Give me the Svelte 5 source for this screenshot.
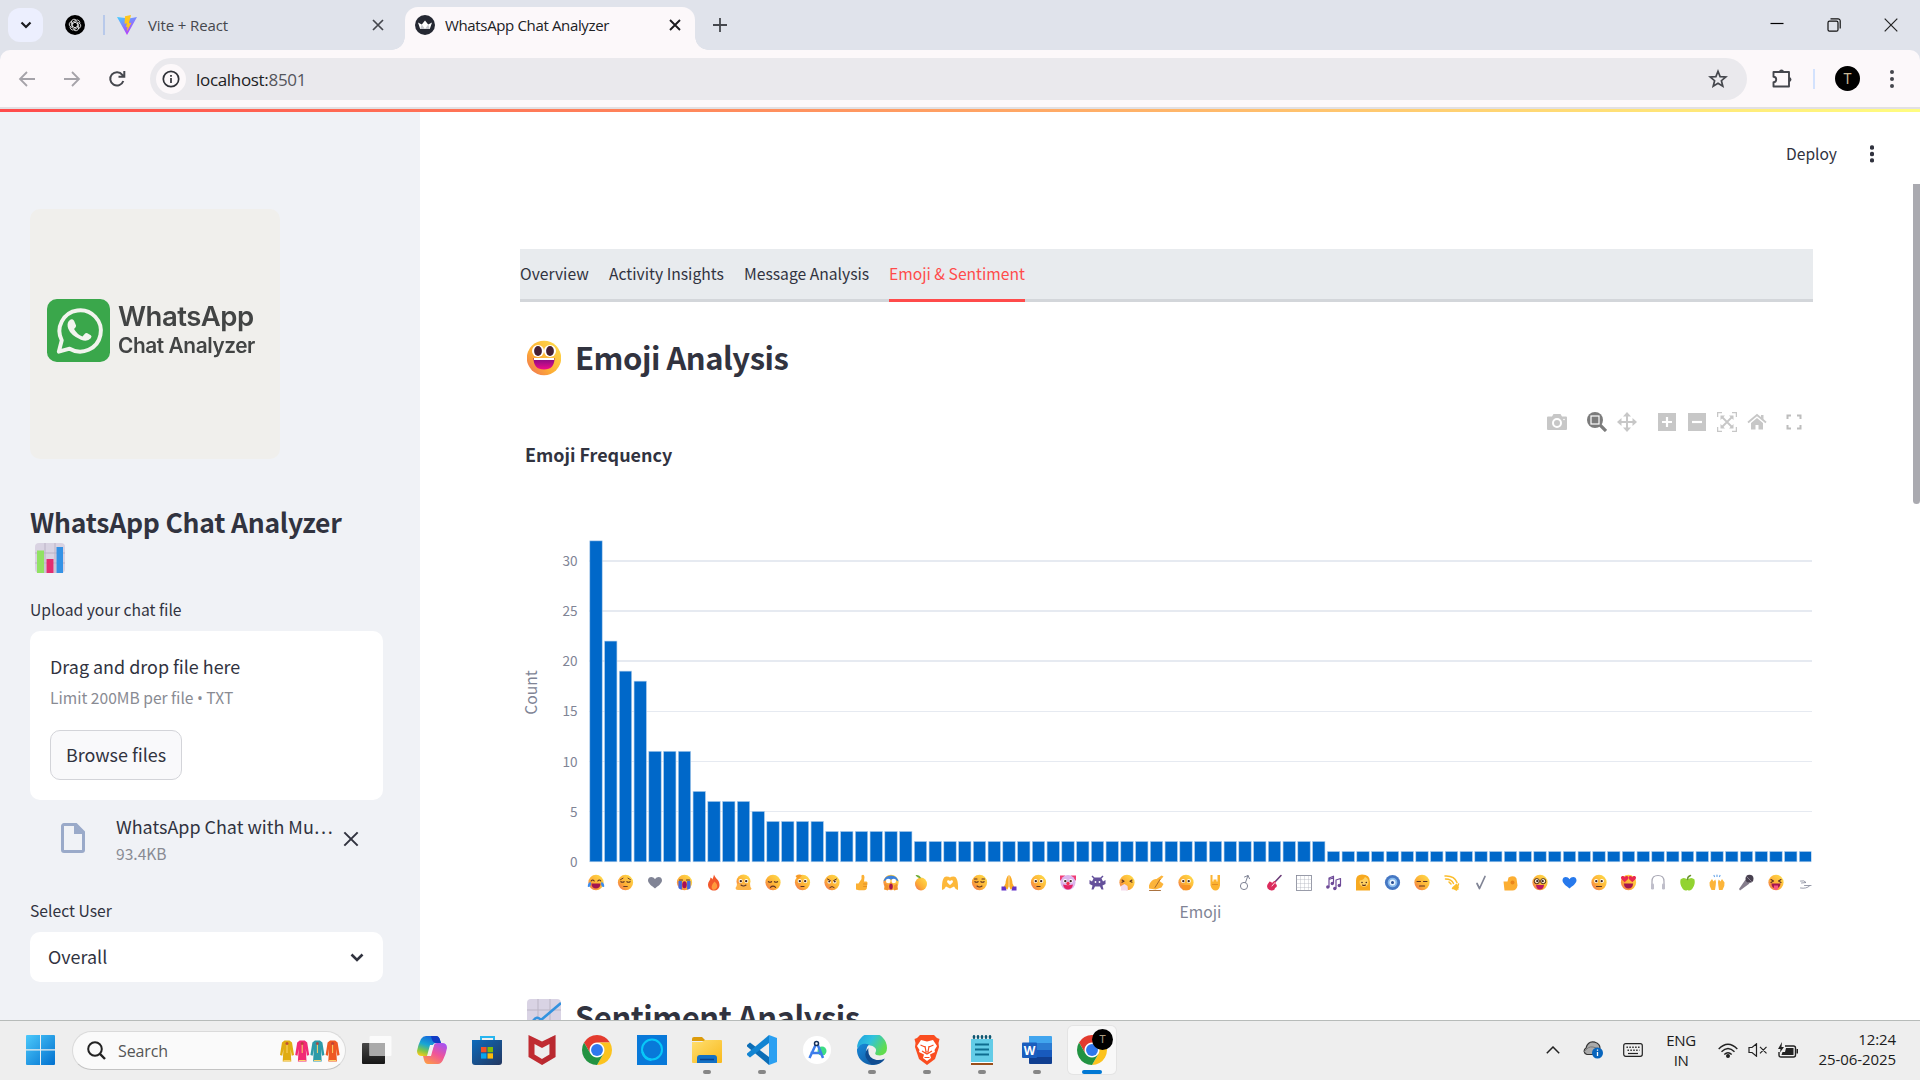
<script>
  const values = [32, 22, 19, 18, 11, 11, 11, 7, 6, 6, 6, 5, ...Array(4).fill(4), ...Array(6).fill(3), ...Array(28).fill(2), ...Array(33).fill(1)];
  const step = 14.75;
  const unit = 10.02;
  const x0 = 76;
  const y0 = 341.5;
  const grid = [30, 25, 20, 15, 10, 5];

  const base = '<ellipse rx="7.600" ry="7.800" fill="url(#skin)"/>';
  const eyes = (r = 1) => `<g fill="#4a2a20"><circle cx="-2.8" cy="-1" r="${r}"/><circle cx="2.8" cy="-1" r="${r}"/></g>`;
  const wide = '<g fill="#fff"><circle cx="-2.900" cy="-1.500" r="2"/><circle cx="2.900" cy="-1.500" r="2"/></g><g fill="#40251f"><circle cx="-2.700" cy="-1.400" r="1.200"/><circle cx="2.700" cy="-1.400" r="1.200"/></g>';
  const line = (d, c = '#5c3324', w = 1.1) => `<path d="${d}" fill="none" stroke="${c}" stroke-width="${w}" stroke-linecap="round" stroke-linejoin="round"/>`;
  const fill = (d, c) => `<path d="${d}" fill="${c}"/>`;
  const closed = line('M-4.6-.8q1.6 1.2 3.2 0M1.4-.8q1.6 1.2 3.2 0');
  const heart = 'M0 6C-3 3.600-7 1-7-2.200-7-6-2-6.800 0-3.200 2-6.800 7-6 7-2.200 7 1 3 3.600 0 6z';
  const lol = fill('M-4.600 1h9.200q-.4 5-4.600 5t-4.600-5z', '#a3164f');

  const emojis = [
    base + line('M-4.800-1.500q1.500-2 3 0M1.800-1.500q1.500-2 3 0') + lol + fill('M-8 2q1-3 3-2 0 4-2 4.500T-8 2zM8 2q-1-3-3-2 0 4 2 4.500T8 2z', '#3c8dee'),
    base + closed + line('M-5-2.800l2.500-1.500M5-2.800l-2.500-1.500M-1.800 4h3.600', '#5c3324', .9),
    fill(heart, '#808495'),
    base + line('M-5-2.500h3M2-2.500h3') + fill('M-6-1.500h3.400v8.500q-2 0-3.400-1.500zM6-1.500H2.600v8.500q2 0 3.400-1.500z', '#4268e0') + '<ellipse cy="2.300" rx="2.300" ry="3.500" fill="#a80f58"/>',
    fill('M0-8c1 4 5.500 5 5.500 10.500C5.500 6 3 8 0 8s-6-2-6-6c0-3 2.500-4 2.500-7 1 .5 1.500 1 1.800 2Q-.5-5 0-8z', '#f2582b') + fill('M.5-1q3.500 3 2.500 6Q1 8-1.500 7-4 4 .5-1z', '#ff9a3d'),
    '<circle cy="-1" r="7" fill="url(#skin)"/>' + fill('M-6.500 1q0 3-1.500 4.500 0 2.500 3.500 2h8.500q4 .5 4-1.500Q6.500 4.500 6.500 1z', '#fdb54a') + wide + line('M-2.500 2.500q2.500 2 5 0'),
    base + closed + line('M-2.600 4.800q2.600-2.400 5.200 0'),
    base + wide + fill('M-7-6.500q4-2.500 6.500-.5l-4 4z', '#f79a27') + line('M-1.500 4h3'),
    base + '<g fill="#fff"><circle cx="-2.800" cy="-.6" r="1.700"/><circle cx="2.800" cy="-.6" r="1.700"/></g>' + eyes(1) + line('M-4.500-3.500l3 1.700M4.500-3.500l-3 1.700M-2.200 5q2.200-2.200 4.400 0', '#5c3324', 1),
    fill('M-5.500 1h2.500l3-4.500V-7q2.500-1.800 3 1.500L2.500-1H5q1.500.7.8 2l-.5 5q-.5 1.800-2.500 1.800h-5.300L-5.500 7z', '#fbb034') + line('M2 1.500h3.500M2 4h3', '#dd8420', .7),
    base + fill('M-7.600-1A7.800 7.800 0 0 1 7.600-1L4-3h-8z', '#3d82dd') + '<circle cx="-2.800" cy="-1.500" r="2.300" fill="#fff"/><circle cx="2.800" cy="-1.500" r="2.300" fill="#fff"/>' + fill('M-7 7l1-6 3 2v5zM7 7l-1-6-3 2v5z', '#f3932b') + '<ellipse cy="4" rx="1.800" ry="3" fill="#a3164f"/>',
    '<ellipse cy="1.500" cx=".5" rx="6" ry="6.500" fill="url(#skin)"/>' + fill('M-5-7.500q4-.5 5.500 3-3.500 1-5.500-3z', '#6cab36'),
    fill('M-8 7.500Q-8.500-6-3.500-6q2.500 0 3.500 1 1-1 3.500-1Q8.500-6 8 7.500q-3-1-4-3.500L0 6l-4-2q-1 2.500-4 3.500z', '#fdb83a') + `<g transform="scale(.42)">${fill(heart, '#fff')}</g>`,
    base + closed + line('M-5-3.500h2.500M2.500-3.500H5M-2.500 3.500q2.500 2 5 0'),
    fill('M-.3-7.500q-2.700 2-3.200 8.500l-2 4 4 2 1.200-3zM.3-7.500q2.700 2 3.200 8.500l2 4-4 2-1.200-3z', '#fbac28') + fill('M-7.500 4l4 0 1 4h-5zM7.500 4l-4 0-1 4h5z', '#6333c8'),
    base + wide + line('M-1.600 4h3.200'),
    fill('M-8-7h5v5h-5zM8-7H3v5h5z', '#f23b73') + '<circle r="7.500" fill="#dcb6ed"/>' + wide + fill('M-5 2q5 1.500 10 0-1 5-5 5t-5-5z', '#e52366') + '<circle cy="1" r="1.700" fill="#f0354d"/>',
    fill('M-5-7l2 2h6l2-2 1 1-2 2 1.500 3L8-2.500v4L5 3l1 4H4L2.500 4h-5L-4 7h-2l1-4-3-1.500v-4L-5.500-1-4-4l-2-2z', '#64509b') + '<g fill="#fff"><circle cx="-2" cy="-.5" r=".9"/><circle cx="2" cy="-.5" r=".9"/></g>',
    base + line('M-5-2.500l2 1.200-2 1M5-2.500L3-1.300l2 1') + fill('M-6 3.500l3.500-2 3 2 .5 4.500h-7z', '#f3dcee'),
    fill('M-7.500 3Q-5-4 0-3.500L5-7l2 1-4 4.500 4 3L5 5l-6 2-6.500-1z', '#fcb43a') + line('M-7 8H4M3.500-3l-5 8', '#a0622a', .9),
    base + wide + fill('M-5 2.500h9q2.500 4-2 5.300h-5z', '#f79425'),
    fill('M-5-7.500h2V-1h1v-2h3v2h1v-6.500h2.500V3q-1 5-4.500 5T-5 3z', '#fcb331') + line('M-3 2h5', '#dc8422', .8),
    '<circle cx="-1" cy="3.500" r="3.600" fill="none" stroke="#808495" stroke-width="1"/>' + line('M.5 0l2.500-7M-.5-5.500L3-7l1.500 3.200', '#808495', 1),
    line('M-1 1l7.500-8', '#6b3b77', 1.600) + fill('M-5-1q2 0 2.500 1.500Q0-2.500 1.500-1L1 1.500q2 .5 1 3Q0 5 0 7q-2 1.500-5 .5-3.500-2-2-5.500z', '#dc2b5c') + line('M-2.500 3.500l3-3.500', '#fff', .8),
    '<rect x="-7.500" y="-7" width="15" height="15" fill="#fff" stroke="#808495" stroke-width=".8"/>' + line('M-7-3H7M-7 1H7M-7 5H7M-3.500-6V7M.5-6V7M4.500-6V7', '#b0b3be', .4),
    line('M-4.500 4.500v-9l4.500-1.800v7M2.500 5.500v-8L7-4v7M-4.500-3l4.500-1.800', '#6e4a98', 1.200) + '<g fill="#6e4a98"><circle cx="-5.700" cy="4.500" r="1.700"/><circle cx="-1.200" cy="1" r="1.700"/><circle cx="1.300" cy="6" r="1.700"/><circle cx="5.800" cy="3" r="1.700"/></g>',
    fill('M-7 8V-2q0-6 6-6 8 0 8 7v9z', '#f7a920') + '<ellipse cx="1" cy="-.5" rx="4.500" ry="5" fill="#ffd264"/>' + fill('M-4-2q5 0 6-4-5-2-6 4z', '#f7a920') + '<g fill="#4a2a20"><circle cx="-1" cy="0" r=".8"/><circle cx="3.300" cy="0" r=".8"/></g>' + line('M-.5 2.500q1.500 1 3 0'),
    '<circle r="7.600" fill="#4577c3"/><circle r="4.800" fill="#86b9ec"/><circle r="3" fill="#e9f4ff"/><circle r="1.500" fill="#254b93"/>',
    base + line('M-5-1h3.500M1.500-1H5M-2.500 3.500h5'),
    line('M-6.500-6.500Q3-7 5.500 0M-6-3.500Q0-3.500 2 1M-2.500-.5l2 2M7 1.500L5 7.500M6.500 6.500L1 6', '#fbbd2d', 1.500) + fill('M5 1l2.500 4L4 8 .5 5z', '#fbbd2d'),
    line('M-4 1l2.500 5L4-6', '#808495', 1.7),
    fill('M-7-1h4l1-4q6-3 8 1l1 7q-1 5-5 5h-8z', '#fcae32') + '<circle cx="2" cy="0" r="2" fill="#e9861d"/>',
    base + wide + '<g fill="none" stroke="#40251f" stroke-width=".9"><circle cx="-3.200" cy="-1.300" r="2.600"/><circle cx="3.200" cy="-1.300" r="2.600"/></g>' + fill('M-4 2.500h8q-.5 4.500-4 4.500t-4-4.500z', '#bd1760'),
    fill(heart, '#2779ec'),
    base + wide + line('M-2.500 4h5'),
    base + lol + `<g transform="translate(-3.800 -3.500) scale(.53)">${fill(heart, '#e9284f')}</g><g transform="translate(3.800 -3.500) scale(.53)">${fill(heart, '#e9284f')}</g>`,
    line('M-6 3v-4q0-6 6-6t6 6v4', '#a8a7b4', 1.200) + '<rect x="-7" y="1" width="3" height="6" rx="1.300" fill="#bfbeca"/><rect x="4" y="1" width="3" height="6" rx="1.300" fill="#bfbeca"/>',
    fill('M0-3q4-3 7 0 1 5-2 9-2 3-5 1.500Q-3 9-5 6q-3-4-2-9 3-3 7 0z', '#92d331') + line('M0-3q0-3 3-4', '#6d9535', 1.500),
    fill('M-2 7.500h-3.500Q-8 4-7.500 0L-5-3.500-3.500-1l1.800-2Q-.5-1-1.300 3zM2 7.500h3.500Q8 4 7.500 0L5-3.500 3.500-1l-1.800-2Q.5-1 1.300 3z', '#fcb53a') + line('M0-7.500v1.500M-3-7l.5 1M3-7l-.5 1', '#6aa7e9', 1.200),
    fill('M-7.500 6.500L-1-3l4 4-9.500 7z', '#857d8c') + '<circle cx="3" cy="-3.800" r="4" fill="#48404f"/>' + line('M0-6l5 5', '#9992a3', .8),
    base + line('M-5-3l2.500 1.500L-5 0M5-3L2.500-1.500 5 0') + lol + fill('M-2 3h4v3.500q-2 2-4 0z', '#f75581'),
    line('M-5-1.500q4-1 5.500 1.500L-4 .5M-1 3h7M-5 5.500q6 1 9-2', '#808495', .8)
  ];

  const pins = [
    { id: 'taskview' }, { id: 'copilot' }, { id: 'store' }, { id: 'mcafee' }, { id: 'chrome' }, { id: 'alexa' },
    { id: 'explorer', open: true }, { id: 'code', open: true }, { id: 'studio' }, { id: 'edge', open: true },
    { id: 'brave', open: true }, { id: 'notepad', open: true }, { id: 'word', open: true }, { id: 'chrome', active: true }
  ];
  const robes = ['#e0ac12', '#f12a75', '#2d9aa9', '#ee5923'];
</script>

{#snippet chromeLogo()}
  <svg viewBox="0 0 48 48" width="30" height="30">
    <circle cx="24" cy="24" r="12" fill="#fff" />
    <path d="M24 12H44.780a24 24 0 0 0-41.560 0L13.610 30A12 12 0 0 1 24 12Z" fill="#e33b2e" />
    <path d="M34.390 30 24 48A24 24 0 0 0 44.780 12H24A12 12 0 0 1 34.390 30Z" fill="#fcc31e" />
    <path d="M13.610 30 3.220 12A24 24 0 0 0 24 48L34.390 30A12 12 0 0 1 13.610 30Z" fill="#229342" />
    <circle cx="24" cy="24" r="9.500" fill="#2f78ee" />
  </svg>
{/snippet}

{#snippet cross(size, w, color)}
  <svg width={size} height={size} viewBox="0 0 12 12"><path d="M1 1l10 10M11 1L1 11" stroke={color} stroke-width={w} fill="none" /></svg>
{/snippet}

<div class="screen">
  <header class="tabstrip">
    <div class="tabsearch">
      <svg width="12" height="8" viewBox="0 0 12 8"><path d="M1.500 1.500L6 6l4.500-4.500" fill="none" stroke="#1b1b1f" stroke-width="2.200" /></svg>
    </div>
    <svg class="gpt" width="20" height="20" viewBox="0 0 20 20">
      <circle cx="10" cy="10" r="10" fill="#000" />
      <g fill="none" stroke="#fff" stroke-width=".75">
        {#each [0, 60, 120, 180, 240, 300] as a}
          <path d="M7.600 12V7.200l3.200-1.900a2.800 2.800 0 0 1 3.900 3.500" transform="rotate({a} 10 10)" />
        {/each}
      </g>
    </svg>
    <i class="pinsep"></i>
    <div class="tab idle">
      <svg width="20" height="20" viewBox="0 0 20 20">
        <defs>
          <linearGradient id="vite" x1="0" y1="0" x2=".6" y2="1"><stop offset="0" stop-color="#41d1ff" /><stop offset="1" stop-color="#bd34fe" /></linearGradient>
        </defs>
        <path d="M0 2l10 18L20 2l-8 1.500z" fill="url(#vite)" />
        <path d="M14 0L8 1.200l-.5 7.500 2.300-.5-.8 4 1.600-.4-.8 5 4.600-9-2.500.4z" fill="#ffc61c" />
      </svg>
      <span>Vite + React</span>
      {@render cross(12, 1.7, '#45474d')}
    </div>
    <div class="tab current">
      <svg width="20" height="20" viewBox="0 0 20 20">
        <circle cx="10" cy="10" r="10" fill="#252832" />
        <path d="M3 7.500l3.800 2L10 5.500l3.200 4 3.800-2-2.200 6.500H5.200z" fill="#fff" />
        <path d="M6.800 9.500L10 14H5.200zM13.200 9.500L10 14h4.800z" fill="#c9cad0" />
      </svg>
      <span>WhatsApp Chat Analyzer</span>
      {@render cross(12, 1.9, '#1b1b1f')}
    </div>
    <svg class="newtab" width="14" height="14" viewBox="0 0 14 14"><path d="M7 0v14M0 7h14" stroke="#45474d" stroke-width="1.800" /></svg>
    <div class="winctl">
      <svg width="14" height="14" viewBox="0 0 14 14"><path d="M.5 5.500h13" stroke="#000" stroke-width="1.200" /></svg>
      <svg width="14" height="14" viewBox="0 0 14 14" fill="none" stroke="#111" stroke-width="1.200"><rect x="1" y="3.200" width="10" height="10" rx="1.500" /><path d="M3.500.8h7.500a2.200 2.200 0 0 1 2.200 2.200v7.500" /></svg>
      <svg width="14" height="14" viewBox="0 0 14 14"><path d="M.7.7l12.600 12.600M13.300.7L.7 13.300" stroke="#222" stroke-width="1.200" /></svg>
    </div>
  </header>

  <div class="toolbar">
    <svg class="nav" width="18" height="18" viewBox="0 0 18 18" fill="none" stroke="#a5a3a9" stroke-width="1.800"><path d="M17 9H2M9 2L2 9l7 7" /></svg>
    <svg class="nav" width="18" height="18" viewBox="0 0 18 18" fill="none" stroke="#a5a3a9" stroke-width="1.800"><path d="M1 9h15M9 2l7 7-7 7" /></svg>
    <svg class="nav" width="18" height="18" viewBox="0 0 18 18" fill="none" stroke="#45474d" stroke-width="2"><path d="M15.300 11a6.700 6.700 0 1 1-1-6.200l1.400 1.600M16.300 1v5.800h-5.800" /></svg>
    <div class="omnibox">
      <div class="info"><svg width="18" height="18" viewBox="0 0 18 18"><circle cx="9" cy="9" r="7.700" fill="none" stroke="#303238" stroke-width="1.700" /><path d="M9 8v5M9 5v1.800" stroke="#303238" stroke-width="1.700" /></svg></div>
      <span class="url">localhost:<em>8501</em></span>
      <svg class="star" width="20" height="20" viewBox="0 0 20 20"><path d="M10 2.300l2.100 5.300 5.700.4-4.400 3.700 1.400 5.500-4.800-3-4.800 3 1.400-5.500L2.200 8l5.700-.4z" fill="none" stroke="#45474d" stroke-width="1.700" /></svg>
    </div>
    <svg class="puzzle" width="22" height="22" viewBox="0 0 22 22"><path d="M3.500 4h5.200M12.300 4H18v14.500H2.500v-4.300a2.700 2.700 0 0 0 0-5.400V4h6.200M12.300 4H8.700" fill="none" stroke="#45474d" stroke-width="1.900" stroke-linejoin="round" /><path d="M8 4a2.500 2.500 0 0 1 5 0zM18 9a2.500 2.500 0 0 1 0 5z" fill="#45474d" /></svg>
    <i class="toolsep"></i>
    <div class="avatar">T</div>
    <svg class="more" width="4" height="20" viewBox="0 0 4 20" fill="#45474d"><circle cx="2" cy="3" r="2" /><circle cx="2" cy="10" r="2" /><circle cx="2" cy="17" r="2" /></svg>
  </div>
  <div class="rainbow"></div>

  <div class="page">
    <aside>
      <div class="brand">
        <svg class="wa" width="63" height="63" viewBox="0 0 64 64">
          <rect width="64" height="64" rx="10" fill="#3aa74b" />
          <path d="M12 53.500l3-11.500A21 21 0 1 1 23 50.500z" fill="none" stroke="#f2f4ee" stroke-width="4" stroke-linejoin="round" />
          <path d="M22 22.500q3-3.500 5.500-.5l2 5q.5 1.500-2 3.500 3 5.500 8.500 7.500l2.500-2.800q1-1 2.500-.3l3.500 2q1.500 1 0 3-3.500 4-10 1.500Q24 37 21.500 30q-1.500-4.500.5-7.500z" fill="#f2f4ee" />
        </svg>
        <div class="brandtext"><b>WhatsApp</b><span>Chat Analyzer</span></div>
      </div>
      <h2><span>WhatsApp Chat Analyzer</span>
        <svg width="30" height="30" viewBox="0 0 30 30">
          <rect width="30" height="30" rx="4" fill="#d9d3e2" />
          <path d="M10 0v30M20 0v30M0 10h30M0 20h30" stroke="#bbb3c6" stroke-width="1" />
          <rect x="2" y="7.500" width="7" height="22.500" fill="#91e263" /><rect x="11.500" y="16" width="7" height="14" fill="#e32d70" /><rect x="21.500" y="4" width="6.500" height="26" fill="#3492e5" />
        </svg>
      </h2>
      <label class="lbl">Upload your chat file</label>
      <div class="drop">
        <div class="t20">Drag and drop file here</div>
        <div class="small">Limit 200MB per file <i>•</i> TXT</div>
        <button class="t20">Browse files</button>
      </div>
      <div class="file">
        <svg width="24" height="30" viewBox="0 0 24 30"><path d="M3 1.500h12l7.500 7.500v18a1.500 1.500 0 0 1-1.500 1.500H3A1.500 1.500 0 0 1 1.500 27V3A1.500 1.500 0 0 1 3 1.500z" fill="none" stroke="#9aaac9" stroke-width="3" /><path d="M13 1l10 10H13z" fill="#9aaac9" /></svg>
        <div class="meta"><span class="t20">WhatsApp Chat with Mu…</span><span class="small">93.4KB</span></div>
        {@render cross(16, 1.5, '#31333f')}
      </div>
      <label class="lbl">Select User</label>
      <div class="select t20"><span>Overall</span>
        <svg width="14" height="9" viewBox="0 0 14 9"><path d="M1.500 1.500L7 7l5.500-5.500" fill="none" stroke="#31333f" stroke-width="2.600" /></svg>
      </div>
    </aside>

    <main>
      <div class="deploy"><span>Deploy</span>
        <svg width="4" height="18" viewBox="0 0 4 18" fill="#31333f"><circle cx="2" cy="2.500" r="2.200" /><circle cx="2" cy="9" r="2.200" /><circle cx="2" cy="15.400" r="2.200" /></svg>
      </div>
      <nav>
        <span class="n1">Overview</span><span class="n2">Activity Insights</span><span class="n3">Message Analysis</span><span class="n4 on">Emoji &amp; Sentiment</span>
      </nav>
      <h1>
        <svg width="34" height="36" viewBox="0 0 34 36">
          <defs>
            <linearGradient id="skin" x1="1" y1="0" x2="0" y2="1"><stop offset="0" stop-color="#ffe14d" /><stop offset=".6" stop-color="#fdae35" /><stop offset="1" stop-color="#ee6a58" /></linearGradient>
            <linearGradient id="mouth" x1="0" y1="0" x2="0" y2="1"><stop offset="0" stop-color="#7c0b83" /><stop offset="1" stop-color="#ee0d8b" /></linearGradient>
          </defs>
          <circle cx="17" cy="18" r="17.200" fill="url(#skin)" />
          <circle cx="11" cy="11" r="6" fill="#fff" /><circle cx="23" cy="11" r="6" fill="#fff" />
          <ellipse cx="11" cy="11" rx="3.900" ry="5" fill="#452034" /><ellipse cx="23" cy="11" rx="3.900" ry="5" fill="#452034" />
          <path d="M6.500 18h21q0 11.500-10.500 11.500T6.500 18z" fill="url(#mouth)" />
          <path d="M7 18h20v2H7z" fill="#fff" />
        </svg>
        <span>Emoji Analysis</span>
      </h1>
      <div class="modebar">
        <svg class="m1" width="20" height="20" viewBox="0 0 20 20"><path d="M1 4.500h4l1.500-2.500h7L15 4.500h4q1 0 1 1V17q0 1-1 1H1q-1 0-1-1V5.500q0-1 1-1z" fill="#c7c7c7" /><circle cx="10" cy="11" r="4" fill="none" stroke="#fff" stroke-width="2" /><circle cx="17" cy="7.500" r=".8" fill="#fff" /></svg>
        <svg class="m2" width="20" height="20" viewBox="0 0 20 20"><circle cx="8" cy="8" r="8" fill="#7c7c7c" /><path d="M12 12l7 7" stroke="#7c7c7c" stroke-width="3.200" /><rect x="4" y="4" width="8" height="8" fill="none" stroke="#fff" stroke-width="1.200" /></svg>
        <svg class="m3" width="20" height="20" viewBox="0 0 20 20"><path d="M10 2v16M2 10h16" stroke="#c7c7c7" stroke-width="2" /><path d="M10 0l4 4.500H6zM10 20l4-4.500H6zM0 10l4.500-4v8zM20 10l-4.500-4v8z" fill="#c7c7c7" /></svg>
        <svg class="m4" width="20" height="20" viewBox="0 0 20 20"><path d="M1 1h18v18H1z" fill="#c7c7c7" /><path d="M10 5v10M5 10h10" stroke="#fff" stroke-width="2.200" /></svg>
        <svg class="m5" width="20" height="20" viewBox="0 0 20 20"><path d="M1 1h18v18H1z" fill="#c7c7c7" /><path d="M5 10h10" stroke="#fff" stroke-width="2.200" /></svg>
        <svg class="m6" width="20" height="20" viewBox="0 0 20 20"><path d="M.6 5V.6H5M15 .6h4.400V5M19.400 15v4.400H15M5 19.400H.6V15" fill="none" stroke="#c7c7c7" stroke-width="1.300" /><path d="M5 5l10 10M15 5L5 15" stroke="#c7c7c7" stroke-width="1.800" /><path d="M3.500 3.500H8L3.500 8zM16.500 3.500H12L16.500 8zM3.500 16.500H8L3.500 12zM16.500 16.500H12l4.500-4.500z" fill="#c7c7c7" /></svg>
        <svg class="m7" width="20" height="20" viewBox="0 0 20 20"><path d="M1 10.500l9-7.500 9 7.500" fill="none" stroke="#c7c7c7" stroke-width="1.800" /><path d="M14 3h2.500v5L14 6zM4 11l6-5 6 5v6.500h-4.500V13h-3v4.500H4z" fill="#c7c7c7" /></svg>
        <svg width="16" height="16" viewBox="0 0 16 16"><path d="M1.500 5V1.500H5M11 1.500h3.500V5M14.500 11v3.500H11M5 14.500H1.500V11" fill="none" stroke="#bdbdbd" stroke-width="2" /></svg>
      </div>
      <h3>Emoji Frequency</h3>

      <svg class="chart" width="1293" height="420" viewBox="0 0 1293 420">
        {#each grid as g, i}
          <line x1="69" x2="1292" y1={Math.round(y0 - g * unit) - (i < 3 ? 0 : -0.5)} y2={Math.round(y0 - g * unit) - (i < 3 ? 0 : -0.5)} stroke="#e6eaf1" stroke-width={i < 3 ? 2 : 1} />
          <text x="57.500" y={y0 - g * unit + 5.2} text-anchor="end">{g}</text>
        {/each}
        <text x="57.500" y="347" text-anchor="end">0</text>
        {#each values as v, i}
          <rect x={x0 + i * step - 6.2} y={y0 - v * unit} width="12.400" height={v * unit + 0.3} fill="#0068c9" stroke="#b4d0ec" stroke-width=".6" />
        {/each}
        {#each emojis as e, i}
          <g transform="translate({x0 + i * 2 * step} 362.500)">{@html e}</g>
        {/each}
        <rect x="1291.500" y="325" width="2" height="60" fill="#fff" />
        <text class="axis" x="680.500" y="398" text-anchor="middle">Emoji</text>
        <text class="axis" transform="translate(16.800 172.500) rotate(-90)" text-anchor="middle">Count</text>
      </svg>

      <h1 class="second">
        <svg width="34" height="36" viewBox="0 0 34 36"><rect width="34" height="36" rx="4" fill="#d9d3e4" /><path d="M11 0v36M23 0v36M0 11h34" stroke="#bbb5c5" /><path d="M6 22q4-6 8-1L34 4" fill="none" stroke="#3492df" stroke-width="2.600" /></svg>
        <span>Sentiment Analysis</span>
      </h1>
      <i class="thumb"></i>
    </main>
  </div>

  <footer>
    <svg class="start" width="29" height="30" viewBox="0 0 29 30">
      <defs><linearGradient id="win" x1="0" y1="0" x2="1" y2="1"><stop offset="0" stop-color="#4cc9fb" /><stop offset="1" stop-color="#0170cf" /></linearGradient></defs>
      <path d="M1 0h13v14.300H0V1q0-1 1-1zM15 0h13q1 0 1 1v13.300H15zM0 15.500h14V30H1q-1 0-1-1zM15 15.500h14V29q0 1-1 1H15z" fill="url(#win)" />
    </svg>
    <div class="search">
      <svg width="19" height="19" viewBox="0 0 19 19"><circle cx="8" cy="8" r="6.800" fill="none" stroke="#222" stroke-width="2" /><path d="M12.700 12.700l5.300 5.300" stroke="#222" stroke-width="2.400" /></svg>
      <span>Search</span>
      <svg class="robes" width="60" height="22" viewBox="0 0 60 22">
        {#each robes as c, i}
          <g transform="translate({i * 15.2} 0)"><path d="M4.500.5h5l2.500 2 2 12.500-2.300.8L10.600 9l.7 12.500H2.700L3.400 9 2.300 15.800 0 15 2 2.500z" fill={c} /><path d="M7 4v9M3.500 20.500h7" stroke="#fbd36b" stroke-width="1" /><circle cx="7" cy="3.500" r="1.500" fill="#b63c38" opacity=".8" /></g>
        {/each}
      </svg>
    </div>
    <div class="pins">
      {#each pins as p}
        <div class="pin" class:active={p.active}>
          {#if p.id === 'chrome'}
            {@render chromeLogo()}
          {:else}
            <svg width="30" height="30" viewBox="0 0 30 30">
              {#if p.id === 'taskview'}
                <defs><linearGradient id="tv" x1="0" y1="0" x2="0" y2="1"><stop offset="0" stop-color="#474747" /><stop offset="1" stop-color="#161616" /></linearGradient></defs>
                <rect y="8" width="23" height="21" rx="1" fill="url(#tv)" /><rect x="7.500" y="1" width="22" height="20" rx="1" fill="#fff" opacity=".75" /><path d="M7.500 8H23v13H7.500z" fill="#aaa" />
              {:else if p.id === 'copilot'}
                <defs>
                  <linearGradient id="cp1" x1=".6" y1="0" x2=".2" y2="1"><stop offset="0" stop-color="#1563dc" /><stop offset=".45" stop-color="#19a7d4" /><stop offset=".75" stop-color="#7dc64b" /><stop offset="1" stop-color="#f8ca17" /></linearGradient>
                  <linearGradient id="cp2" x1=".8" y1="0" x2=".2" y2="1"><stop offset="0" stop-color="#a552f2" /><stop offset=".5" stop-color="#f05598" /><stop offset="1" stop-color="#fd9a47" /></linearGradient>
                </defs>
                <path d="M9 1h10q3 0 4 4l1 3h-5q-3 0-4 4l-2 7q-1 2-3 2H5q-5 0-5-5 1-6 4-12 2-3 5-3z" fill="url(#cp1)" />
                <path d="M21 29H11q-3 0-4-4l-1-4h5q2 0 3-3l3-8q1-2 3-2h5q5 0 5 5-1 6-4 12-2 4-5 4z" fill="url(#cp2)" />
                <path d="M14 1h5q3 0 4 4l1 3h-6q-3-1-4-7z" fill="#123bc4" /><path d="M13 10h4l-3 11h-4z" fill="#f2f0ef" />
              {:else if p.id === 'store'}
                <defs><linearGradient id="st" x1="0" y1="0" x2="1" y2="1"><stop offset="0" stop-color="#0d6bbc" /><stop offset="1" stop-color="#233760" /></linearGradient></defs>
                <path d="M9 6V2h13v4" fill="none" stroke="#27b5ef" stroke-width="2" /><path d="M0 5h30v22q0 3-3 3H3q-3 0-3-3z" fill="url(#st)" />
                <path d="M9 12h5.500v5.300H9z" fill="#f35325" /><path d="M15.500 12H21v5.300h-5.500z" fill="#81bc06" /><path d="M9 18.300h5.500v5.300H9z" fill="#05a6f0" /><path d="M15.500 18.300H21v5.300h-5.500z" fill="#ffba08" />
              {:else if p.id === 'mcafee'}
                <path d="M1.500 0L15 6.500 28.500 0v22L15 30 1.500 22zM7.500 9v10.500L15 24l7.500-4.500V9L15 13z" fill="#c02b31" fill-rule="evenodd" /><path d="M15 24v6l13.500-8V0l-6 3v16.500z" fill="#a8252d" opacity=".3" />
              {:else if p.id === 'alexa'}
                <path d="M0 0h30v30H0z" fill="#0879d9" /><circle cx="15" cy="14.500" r="10" fill="none" stroke="#08c8f8" stroke-width="2" /><path d="M5.500 17q2 7.500 9 8" fill="none" stroke="#08c8f8" stroke-width="2.400" />
              {:else if p.id === 'explorer'}
                <defs><linearGradient id="fx" x1="0" y1="0" x2="1" y2="1"><stop offset="0" stop-color="#ffdf70" /><stop offset="1" stop-color="#f9b91c" /></linearGradient></defs>
                <path d="M0 4q0-2 2-2h8l4 4H0z" fill="#dc9b0b" /><path d="M0 7h10l3-2h16q1 0 1 1v21q0 1-1 1H1q-1 0-1-1z" fill="url(#fx)" /><path d="M5 28v-5q0-3 3-3h14q3 0 3 3v5z" fill="#1370c4" /><path d="M8 24.500h14" stroke="#07438e" stroke-width="1.500" />
              {:else if p.id === 'code'}
                <path d="M22 0l8 3v24l-8 3z" fill="#2ba0f2" /><path d="M0 10l3-2.500L22 22v8L0 11.500z" fill="#0b6db6" /><path d="M0 20l3 2.500L22 8V0L0 18.500z" fill="#1184d2" />
              {:else if p.id === 'studio'}
                <circle cx="15" cy="15" r="14" fill="#fff" /><circle cx="20" cy="16" r="4.500" fill="#3ddc84" /><path d="M14.500 8L7.500 23M15 8l6 15M8.500 18h11" fill="none" stroke="#3d7eea" stroke-width="2.500" /><circle cx="14.500" cy="8.500" r="2" fill="#fff" stroke="#16325c" stroke-width="1.500" />
              {:else if p.id === 'edge'}
                <defs>
                  <linearGradient id="e1" x1="0" y1="0" x2="1" y2=".5"><stop offset="0" stop-color="#1c9ce0" /><stop offset=".5" stop-color="#30c2dd" /><stop offset="1" stop-color="#60dc4f" /></linearGradient>
                  <linearGradient id="e2" x1="0" y1="0" x2="1" y2="1"><stop offset="0" stop-color="#1989d9" /><stop offset="1" stop-color="#0d4f96" /></linearGradient>
                </defs>
                <path d="M0 13A15 15 0 0 1 30 13q0 7-7 7.500-6 0-4.500-3 2-4-3-6.500Q6 8 0 13z" fill="url(#e1)" />
                <path d="M0 14q4-7 12-4.500Q8 13 9.500 19q2 9 18 5.500-5 6-13 5.500A15 15 0 0 1 0 14z" fill="url(#e2)" />
                <path d="M11.500 13q-1.500 10 8 12 5 .5 8.500-1.500-5 7-14 5.500Q4 20 11.500 13z" fill="#104d91" />
              {:else if p.id === 'brave'}
                <path d="M8 0h14l3 3 2.500 1-1 4 .5 4-4 12-8 6-8-6-4-12 .5-4-1-4L5 3z" fill="#fa4d20" /><path d="M9 5l6 1.500L21 5l4 6-2.500 4 .5 2-5 2.500 1 3.500-4 3-4-3 1-3.500L7 17l.5-2L5 11z" fill="#fff" /><path d="M8.500 10l4.500 2M21.500 10L17 12M13 11l1 6h2l1-6M10 16l5 3 5-3M12.500 22.500h5" stroke="#fa4d20" stroke-width="1.200" fill="none" />
              {:else if p.id === 'notepad'}
                <path d="M4 4h22v23H4z" fill="#63cce7" /><path d="M4 27h22v1.200H4z" fill="#fff" /><path d="M4 28h22v2H4z" fill="#9a4e19" /><path d="M8 9.500h14M8 14.500h14M8 19.500h14" stroke="#0e6d90" stroke-width="1.800" />
                <g fill="#0e5671">{#each [7, 11, 15, 19, 23] as x}<rect x={x - 1.2} y="0" width="2.400" height="4" rx="1.200" />{/each}</g>
              {:else if p.id === 'word'}
                <path d="M7 1h22q1 0 1 1v6H7z" fill="#41a5ee" /><path d="M7 8h23v7H7z" fill="#2b7cd3" /><path d="M7 15h23v7H7z" fill="#185abd" /><path d="M7 22h23v6q0 1-1 1H8q-1 0-1-1z" fill="#103f91" />
                <rect y="7.500" width="15" height="15.500" rx="1" fill="#1b5ebe" /><text x="7.500" y="19.500" text-anchor="middle" class="wordw">W</text>
              {/if}
            </svg>
          {/if}
          {#if p.active}<b class="badge">T</b>{/if}
          {#if p.open || p.active}<i class="dot"></i>{/if}
        </div>
      {/each}
    </div>
    <div class="tray">
      <svg class="t1" width="14" height="8" viewBox="0 0 14 8"><path d="M.8 7.200L7 1l6.200 6.200" fill="none" stroke="#222" stroke-width="1.500" /></svg>
      <svg class="t2" width="20" height="18" viewBox="0 0 20 18"><path d="M4 13.500A3.500 3.500 0 0 1 3 7Q5-.5 12 1.200q5 1.500 5 6l-5 6.300z" fill="#aaa" stroke="#333" stroke-width="1.200" /><path d="M1 11q4-6 9-5l7 2" stroke="#777" fill="none" /><circle cx="14.500" cy="12" r="5.500" fill="#0865bd" /><path d="M14.500 11v4M14.500 8.500v1.300" stroke="#fff" stroke-width="1.300" /></svg>
      <svg class="t3" width="20" height="14" viewBox="0 0 20 14"><rect x=".7" y=".7" width="18.600" height="12.600" rx="2" fill="none" stroke="#222" stroke-width="1.200" /><path d="M3.500 4.300h14M4.500 7.200h12" stroke="#222" stroke-width="1.400" stroke-dasharray="1.400 1.500" /><path d="M5 10.500h10" stroke="#222" stroke-width="1.200" /></svg>
      <div class="lang"><span>ENG</span><span>IN</span></div>
      <svg class="t4" width="20" height="15" viewBox="0 0 20 15" fill="none" stroke="#222" stroke-width="1.400"><path d="M.7 6q9.300-9.500 18.600 0M3.500 8.800q6.500-6.600 13 0M6.300 11.500q3.700-3.700 7.400 0" /><circle cx="10" cy="13" r="1.300" fill="#222" /></svg>
      <svg class="t5" width="20" height="14" viewBox="0 0 20 14" fill="none" stroke="#222" stroke-width="1.200"><path d="M1 4.500h3L8.500.8v12.400L4 9.500H1zM12 3.800l6.500 6.500M18.500 3.800L12 10.300" /></svg>
      <svg class="t6" width="21" height="16" viewBox="0 0 21 16"><path d="M7 4h8.500q2 0 2 2v7q0 2-2 2H3q-2 0-2-2v-3" fill="none" stroke="#222" stroke-width="1.400" /><path d="M8 6h7.500v7H3.500l1-3H7zM18.500 7H20v4.500h-1.500zM4 0L0 7h2.500L2 10.500 6 5H3.500z" fill="#222" /></svg>
      <div class="clock"><span>12:24</span><span>25-06-2025</span></div>
    </div>
  </footer>
</div>

<style>
  :global(body) { margin: 0; overflow: hidden; }
  .screen { width: 1920px; height: 1080px; display: flex; flex-direction: column; overflow: hidden; background: linear-gradient(#e0e3eb 70px, #fff 70px); font-family: "Noto Sans CJK SC", "Open Sans", sans-serif; color: #31333f; }
  svg { flex: none; display: block; }

  .tabstrip, .toolbar, footer { font-family: "Open Sans", "Noto Sans", sans-serif; }
  .tabstrip { height: 50px; flex: none; background: #e0e3eb; display: flex; align-items: center; box-sizing: border-box; padding-left: 8px; }
  .tabsearch { width: 35px; height: 34px; border-radius: 12px; background: #eceffe; display: grid; place-items: center; }
  .gpt { margin-left: 22px; }
  .pinsep { width: 2px; height: 20px; background: #b8c9ea; margin-left: 18px; }
  .tab { display: flex; align-items: center; font-size: 15px; box-sizing: border-box; }
  .tab span { flex: 1; margin-left: 10px; white-space: nowrap; line-height: 20px; }
  .idle { width: 300px; padding: 0 21px 0 12px; color: #45474d; letter-spacing: -0.12px; }
  .idle span { margin-left: 11px; }
  .current { position: relative; width: 290px; height: 43px; align-self: flex-end; background: #fcf8fa; border-radius: 13px 13px 0 0; padding: 0 14px 7px 10px; color: #202124; letter-spacing: -0.35px; }
  .current::before, .current::after { content: ""; position: absolute; bottom: 0; width: 13px; height: 13px; }
  .current::before { left: -13px; background: radial-gradient(circle at 0 0, transparent 12.5px, #fcf8fa 13px); }
  .current::after { right: -13px; background: radial-gradient(circle at 100% 0, transparent 12.5px, #fcf8fa 13px); }
  .newtab { margin-left: 18px; }
  .winctl { margin-left: auto; padding-right: 22px; display: flex; gap: 43px; }

  .toolbar { height: 59px; flex: none; box-sizing: border-box; background: linear-gradient(#fcf8fa 57px, #e2e0e3 57px); display: flex; align-items: center; padding: 0 26px 2px 18px; border-radius: 10px 10px 0 0; }
  .nav { margin-right: 27px; }
  .nav:nth-child(3) { margin-right: 24px; }
  .omnibox { width: 1597px; height: 42px; border-radius: 21px; background: #eae9ed; box-sizing: border-box; display: flex; align-items: center; padding: 0 19px 0 6px; }
  .info { width: 30px; height: 30px; border-radius: 50%; background: #fcf8fa; display: grid; place-items: center; }
  .url { flex: 1; margin-left: 10px; padding-top: 1px; font-size: 17px; letter-spacing: -0.32px; color: #202124; }
  .url em { font-style: normal; color: #54555c; }
  .puzzle { margin-left: 24px; }
  .toolsep { width: 2px; height: 20px; background: #d3e2fd; margin-left: 20px; }
  .avatar { width: 25px; height: 25px; border-radius: 50%; background: #000; color: #c8b898; font: 14px/25px "Inter", sans-serif; text-align: center; margin-left: 20px; }
  .more { margin-left: auto; }
  .rainbow { height: 3px; flex: none; background: linear-gradient(90deg, #ff4b4b, #ff8f5e 40%, #fffd80); }

  .page { height: 908px; flex: none; display: flex; overflow: hidden; background: #fff; }
  aside { width: 420px; height: 908px; flex: none; background: #f0f2f6; box-sizing: border-box; padding: 97px 37px 0 30px; }
  .brand { width: 250px; height: 250px; border-radius: 10px; background: #f0efec; box-sizing: border-box; padding: 90px 0 0 17px; display: flex; align-items: flex-start; }
  .wa { filter: blur(.4px); }
  .brandtext { font-family: "Inter", sans-serif; color: #424444; margin-left: 8px; filter: blur(.4px); white-space: nowrap; }
  .brandtext b { display: block; font-size: 27.500px; font-weight: 600; line-height: 34px; letter-spacing: -0.5px; }
  .brandtext span { display: block; font-size: 20.800px; font-weight: 600; line-height: 26px; letter-spacing: -0.4px; }
  h2, h1, h3 { margin: 0; font-weight: 600; white-space: nowrap; }
  h2 { margin-top: 45px; font-size: 26.500px; line-height: 36px; letter-spacing: -0.23px; }
  h2 span { display: block; }
  h2 svg { margin: 3px 0 0 5px; }
  .lbl { display: block; font-size: 15.680px; line-height: 20px; }
  h2 + .lbl { margin-top: 27px; }
  .t20 { font-size: 17.930px; line-height: 24px; white-space: nowrap; }
  .small { font-size: 15.600px; line-height: 20px; color: #898b93; white-space: nowrap; }
  .small i { font-style: normal; font-family: "Open Sans", sans-serif; }
  .drop { margin-top: 11px; height: 169px; background: #fff; border-radius: 10px; box-sizing: border-box; padding: 23px 20px 0; }
  .drop .small { margin-top: 9px; }
  button { display: block; margin-top: 22px; width: 132px; height: 50px; border: 1px solid #d3d4d9; border-radius: 10px; background: #f9f9fb; color: inherit; font-family: inherit; padding: 0 0 2px; }
  .file { display: flex; align-items: center; height: 76px; padding: 0 0 2px 31px; }
  .meta { width: 220px; margin-left: 31px; margin-right: 7px; display: flex; flex-direction: column; gap: 5px; padding-top: 0; }
  .file :global(svg:last-child) { margin-top: 2px; }
  .file + .lbl { margin-top: 23px; }
  .select { margin-top: 11px; height: 50px; background: #fff; border-radius: 10px; display: flex; align-items: center; justify-content: space-between; padding: 0 19px 0 18px; }
  .select span { padding-bottom: 2px; }

  main { position: relative; width: 1500px; height: 908px; box-sizing: border-box; padding: 29px 107px 0 100px; }
  .deploy { display: flex; justify-content: flex-end; align-items: center; gap: 33px; height: 26px; font-size: 15.600px; margin-right: -61px; }
  .deploy span { padding-bottom: 2px; }
  nav { margin-top: 82px; height: 53px; background: #e8ebee; box-sizing: border-box; border-bottom: 3px solid #d3d6da; display: flex; gap: 20px; font-size: 15.680px; }
  nav span { height: 53px; line-height: 50px; box-sizing: border-box; white-space: nowrap; }
  .n1 { width: 69px; } .n2 { width: 115px; } .n3 { width: 125px; } .n4 { width: 136px; }
  .on { color: #ff4b4b; border-bottom: 3px solid #ff4b4b; }
  h1 { display: flex; align-items: center; font-size: 31px; line-height: 44px; height: 44px; margin-top: 34px; padding-left: 7px; letter-spacing: -0.48px; }
  h1 span { margin: 0 0 2px 14px; }
  .modebar { display: flex; align-items: center; justify-content: flex-end; height: 20px; margin-top: 32px; padding-right: 11px; }
  .m1 { margin-right: 20px; } .m2 { margin-right: 10px; } .m3 { margin-right: 20px; }
  .m4, .m5, .m6 { margin-right: 10px; } .m7 { margin-right: 19px; }
  h3 { font-size: 17.930px; line-height: 24px; margin-top: 10px; padding-left: 5px; }
  .chart { margin-top: 54px; }
  .chart text { font-size: 13.600px; fill: #808495; }
  .chart .axis { font-size: 15.650px; }
  .second { margin-top: 55px; }
  .thumb { position: absolute; right: 0; top: 72px; width: 7px; height: 320px; background: #aaaab0; border-radius: 0 0 4px 4px; }

  footer { height: 60px; flex: none; box-sizing: border-box; border-top: 1px solid #b7bbb9; background: #eee; display: flex; align-items: center; padding: 0 0 1px 26px; }
  .search { margin-left: 17px; width: 274px; height: 39px; box-sizing: border-box; border: 1px solid #dadada; border-bottom-color: #c3c3c3; border-radius: 20px; background: #fafafa; display: flex; align-items: center; padding: 0 5px 0 14px; }
  .search span { flex: 1; margin-left: 12px; padding-top: 1px; font-size: 16px; letter-spacing: -0.1px; color: #555; }
  .robes { margin-top: 2px; }
  .pins { display: flex; gap: 7px; margin-left: 7px; }
  .pin { position: relative; width: 48px; height: 48px; display: grid; place-items: center; border-radius: 5px; }
  .active { background: #f8f8f8; box-shadow: 0 0 0 1px #e4e4e4; }
  .dot { position: absolute; bottom: 0; left: 20px; width: 8px; height: 4px; border-radius: 2px; background: #868686; }
  .active .dot { left: 14px; width: 20px; background: #0078d4; }
  .badge { position: absolute; left: 24px; top: 3px; width: 21px; height: 21px; border-radius: 50%; background: #000; color: #a89a80; font: 11px/21px "Inter", sans-serif; text-align: center; }
  .wordw { font: 700 12px "Open Sans", sans-serif; fill: #fff; }
  .tray { margin-left: auto; display: flex; align-items: center; padding-right: 24px; font-size: 15px; line-height: 20px; letter-spacing: -0.08px; color: #1c1c1c; }
  .t1 { margin-right: 23px; } .t2 { margin-right: 20px; } .t3 { margin-right: 22px; }
  .lang { display: flex; flex-direction: column; align-items: center; width: 32px; margin-right: 21px; letter-spacing: -0.4px; }
  .t4 { margin-right: 10px; } .t5 { margin-right: 10px; }
  .clock { display: flex; flex-direction: column; align-items: flex-end; width: 97px; margin-top: -2px; }
</style>
